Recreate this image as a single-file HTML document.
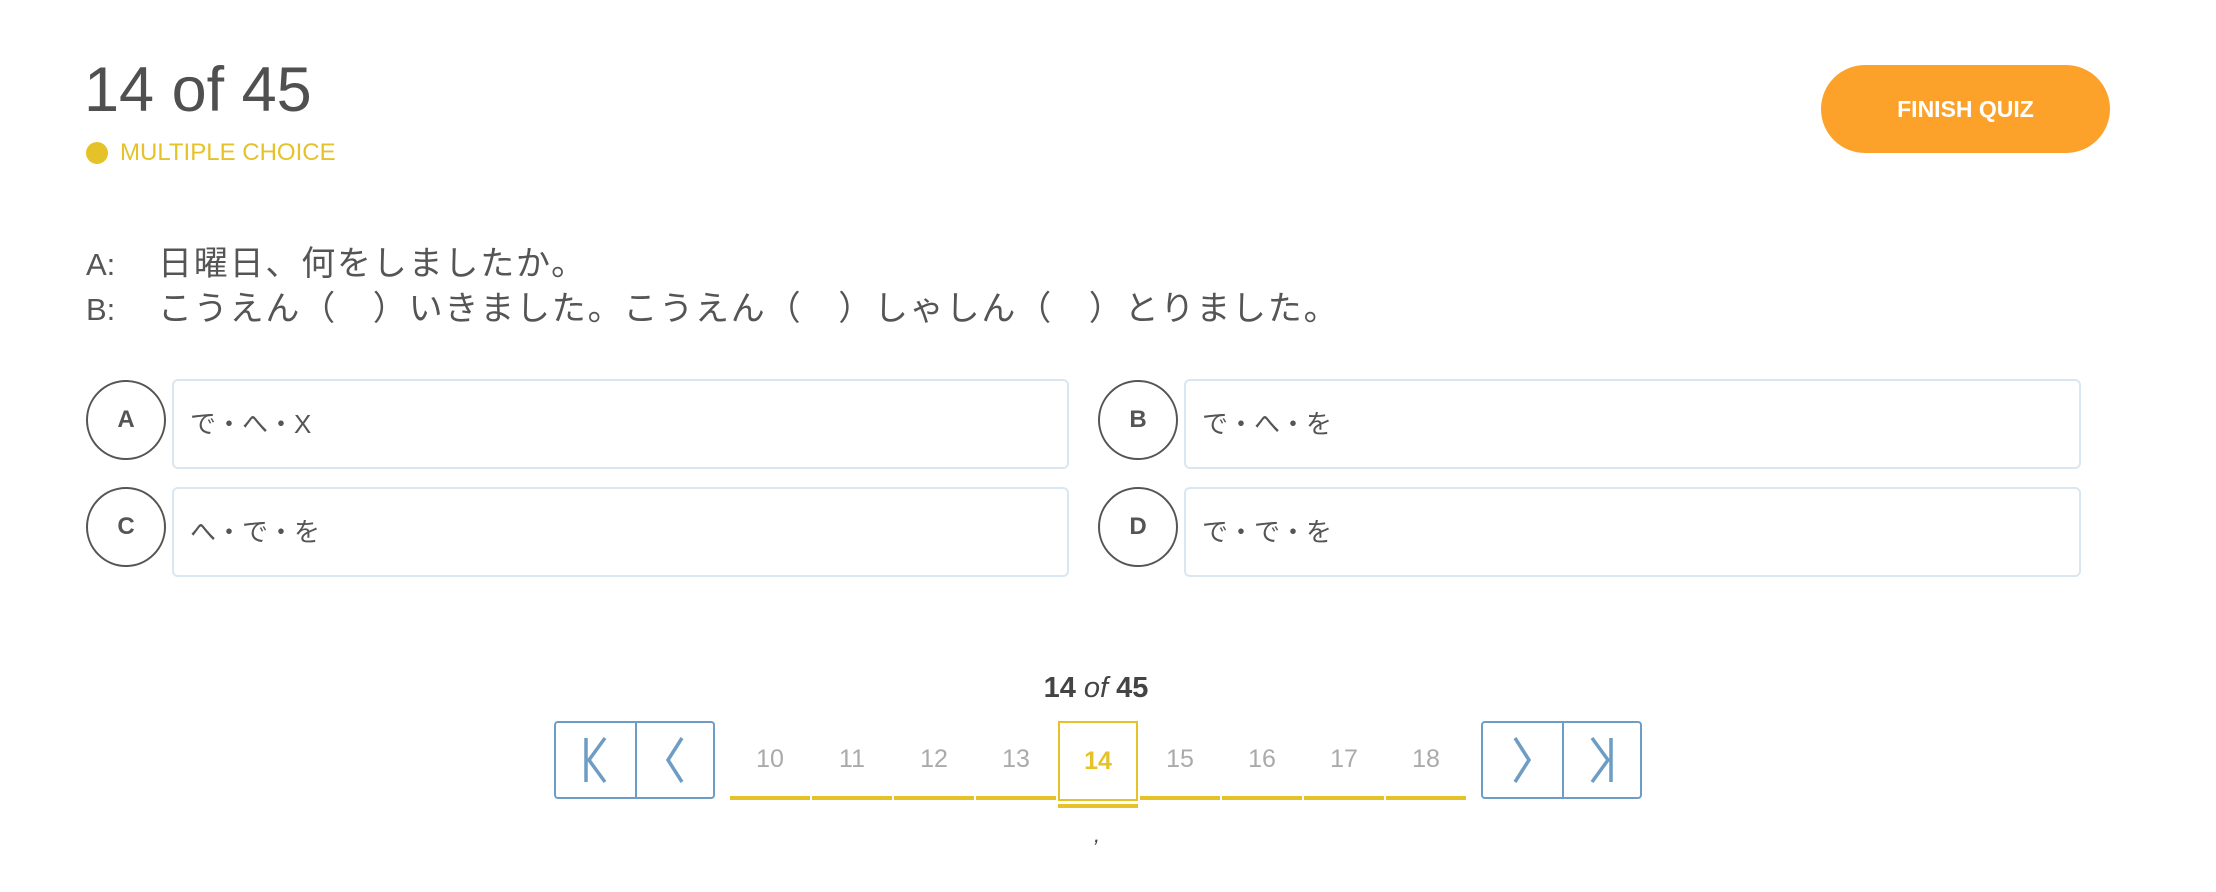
<!DOCTYPE html>
<html><head><meta charset="utf-8"><style>
*{margin:0;padding:0;box-sizing:border-box}
body{width:2216px;height:892px;background:#fff;position:relative;font-family:"Liberation Sans","Noto Sans CJK JP",sans-serif;color:#555;overflow:hidden}
.abs{position:absolute}
.title{left:84px;top:54px;font-size:63px;line-height:72px;color:#505050}
.dot{left:86px;top:142px;width:22px;height:22px;border-radius:50%;background:#e6c229}
.mc{left:120px;top:139px;font-size:24px;line-height:28px;color:#e6c229}
.fin{left:1821px;top:65px;width:289px;height:88px;border-radius:44px;background:#fca22a;color:#fff;font-weight:bold;font-size:23px;line-height:88px;text-align:center}
.q{left:86px;font-size:34px;line-height:44px;color:#555;letter-spacing:1.8px}
.q span{display:inline-block;width:72px;font-size:31px;letter-spacing:0}
.circ{width:80px;height:80px;border:2px solid #555;border-radius:50%;text-align:center;line-height:76px;font-weight:bold;font-size:24px;color:#555}
.box{width:897px;height:90px;border:2px solid #d8e7f2;border-radius:6px;font-size:26px;line-height:86px;padding-left:16px;color:#555}
.pl{left:996px;width:200px;top:672px;text-align:center;font-size:29px;font-weight:bold;color:#444}
.nav{top:721px;height:78px;border:2px solid #6d9dc5;border-radius:4px;display:flex}
.nav div{width:79px;height:74px;display:flex;align-items:center;justify-content:center}
.nav div+div{border-left:2px solid #6d9dc5}
.cell{top:721px;width:80px;height:76px;text-align:center;line-height:76px;font-size:25px;color:#aaa}
.ul{top:796px;width:80px;height:4px;background:#e6c229}
</style></head><body>
<div class="abs title">14 of 45</div>
<div class="abs dot"></div>
<div class="abs mc">MULTIPLE CHOICE</div>
<div class="abs fin">FINISH QUIZ</div>
<div class="abs q" style="top:242px"><span>A:</span>日曜日、何をしましたか。</div>
<div class="abs q" style="top:287px"><span>B:</span>こうえん（　）いきました。こうえん（　）しゃしん（　）とりました。</div>

<div class="abs circ" style="left:86px;top:380px">A</div>
<div class="abs box" style="left:172px;top:379px">で・へ・X</div>
<div class="abs circ" style="left:1098px;top:380px">B</div>
<div class="abs box" style="left:1184px;top:379px">で・へ・を</div>
<div class="abs circ" style="left:86px;top:487px">C</div>
<div class="abs box" style="left:172px;top:487px">へ・で・を</div>
<div class="abs circ" style="left:1098px;top:487px">D</div>
<div class="abs box" style="left:1184px;top:487px">で・で・を</div>

<div class="abs pl">14 <i style="font-weight:normal">of</i> 45</div>
<div class="abs nav" style="left:554px;width:161px">
<div><svg width="30" height="48" viewBox="0 0 30 48" fill="none" stroke="#6d9dc5" stroke-width="3.5"><path d="M6 2V46M25 2L9 24L25 46"/></svg></div>
<div><svg width="30" height="48" viewBox="0 0 30 48" fill="none" stroke="#6d9dc5" stroke-width="3.5"><path d="M22 2L8 24L22 46"/></svg></div>
</div>
<div class="abs nav" style="left:1481px;width:161px">
<div><svg width="30" height="48" viewBox="0 0 30 48" fill="none" stroke="#6d9dc5" stroke-width="3.5"><path d="M8 2L22 24L8 46"/></svg></div>
<div><svg width="30" height="48" viewBox="0 0 30 48" fill="none" stroke="#6d9dc5" stroke-width="3.5"><path d="M24 2V46M5 2L21 24L5 46"/></svg></div>
</div>
<div class="abs cell" style="left:730px">10</div>
<div class="abs cell" style="left:812px">11</div>
<div class="abs cell" style="left:894px">12</div>
<div class="abs cell" style="left:976px">13</div>
<div class="abs cell" style="left:1058px;border:2px solid #e6c229;width:80px;height:80px;line-height:76px;color:#e6c229;font-weight:bold">14</div>
<div class="abs cell" style="left:1140px">15</div>
<div class="abs cell" style="left:1222px">16</div>
<div class="abs cell" style="left:1304px">17</div>
<div class="abs cell" style="left:1386px">18</div>
<div class="abs ul" style="left:730px"></div>
<div class="abs ul" style="left:812px"></div>
<div class="abs ul" style="left:894px"></div>
<div class="abs ul" style="left:976px"></div>
<div class="abs ul" style="left:1058px;top:804px"></div>
<div class="abs ul" style="left:1140px"></div>
<div class="abs ul" style="left:1222px"></div>
<div class="abs ul" style="left:1304px"></div>
<div class="abs ul" style="left:1386px"></div>
<div class="abs" style="left:1094px;top:822px;font-size:22px;font-style:italic;color:#444">,</div>
</body></html>
